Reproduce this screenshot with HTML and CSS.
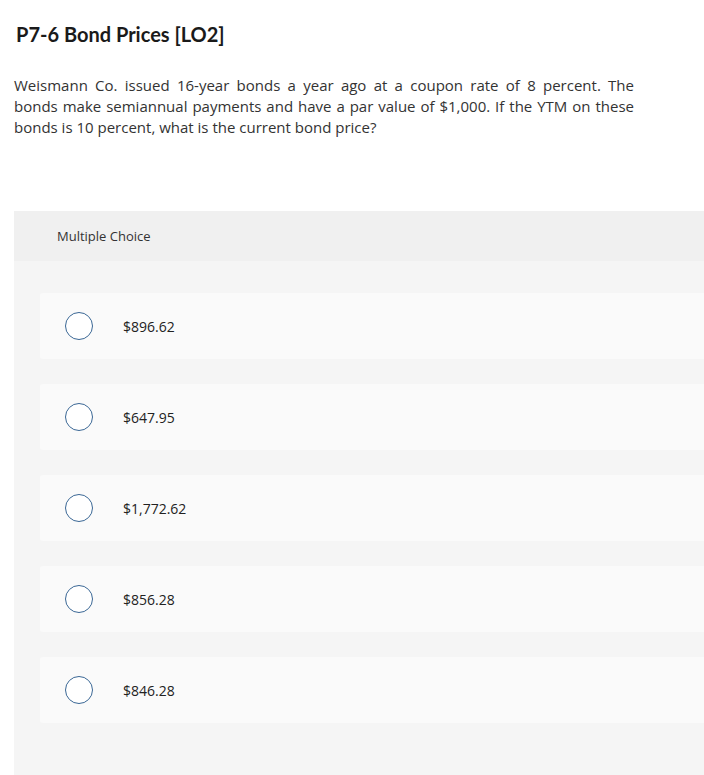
FILE: index.html
```html
<!DOCTYPE html>
<html>
<head>
<meta charset="utf-8">
<link rel="stylesheet" href="styles.css">
</head>
<body>
<div class="page">
  <h1 class="title">P7-6 Bond Prices [LO2]</h1>
  <p class="question"><span class="line full">Weismann Co. issued 16-year bonds a year ago at a coupon rate of 8 percent. The</span><span class="line full">bonds make semiannual payments and have a par value of $1,000. If the YTM on these</span><span class="line">bonds is 10 percent, what is the current bond price?</span></p>
  <div class="panel">
    <div class="panel-head">Multiple Choice</div>
    <div class="options">
      <div class="option"><span class="radio"></span><span class="label">$896.62</span></div>
      <div class="option"><span class="radio"></span><span class="label">$647.95</span></div>
      <div class="option"><span class="radio"></span><span class="label">$1,772.62</span></div>
      <div class="option"><span class="radio"></span><span class="label">$856.28</span></div>
      <div class="option"><span class="radio"></span><span class="label">$846.28</span></div>
    </div>
  </div>
</div>
</body>
</html>
```
FILE: styles.css
```css
html, body {
  margin: 0;
  padding: 0;
  overflow: hidden;
  background: #ffffff;
}
body {
  font-family: "Open Sans", Lato, sans-serif;
  color: #222;
}
.page {
  padding: 0 0 0 14px;
}
.title {
  margin: 0;
  padding: 22px 0 0 2px;
  font-family: Lato, "Open Sans", sans-serif;
  font-size: 20px;
  font-weight: 700;
  line-height: 24px;
  color: #1a1a1a;
}
.question {
  margin: 0;
  padding-top: 29px;
  width: 620px;
  font-size: 15px;
  line-height: 21px;
  color: #333;
}
.line {
  display: block;
  white-space: nowrap;
}
.line.full {
  white-space: normal;
  text-align: justify;
  text-align-last: justify;
}
.panel {
  margin-top: 73px;
  margin-right: -20px;
  background: #f5f5f5;
  height: 600px;
}
.panel-head {
  background: #f0f0f0;
  height: 50px;
  padding-left: 43px;
  display: flex;
  align-items: center;
  font-size: 13px;
  color: #333;
}
.options {
  padding: 32px 0 0 26px;
  display: flex;
  flex-direction: column;
  gap: 25px;
}
.option {
  height: 66px;
  background: #fafafa;
  border-radius: 3px;
  display: flex;
  align-items: center;
  padding-left: 25px;
}
.radio {
  width: 28px;
  height: 28px;
  border: 1.5px solid #3a6795;
  border-radius: 50%;
  background: #fff;
  box-sizing: border-box;
  flex: none;
}
.label {
  margin-left: 30px;
  font-size: 14px;
  color: #222;
}
```
